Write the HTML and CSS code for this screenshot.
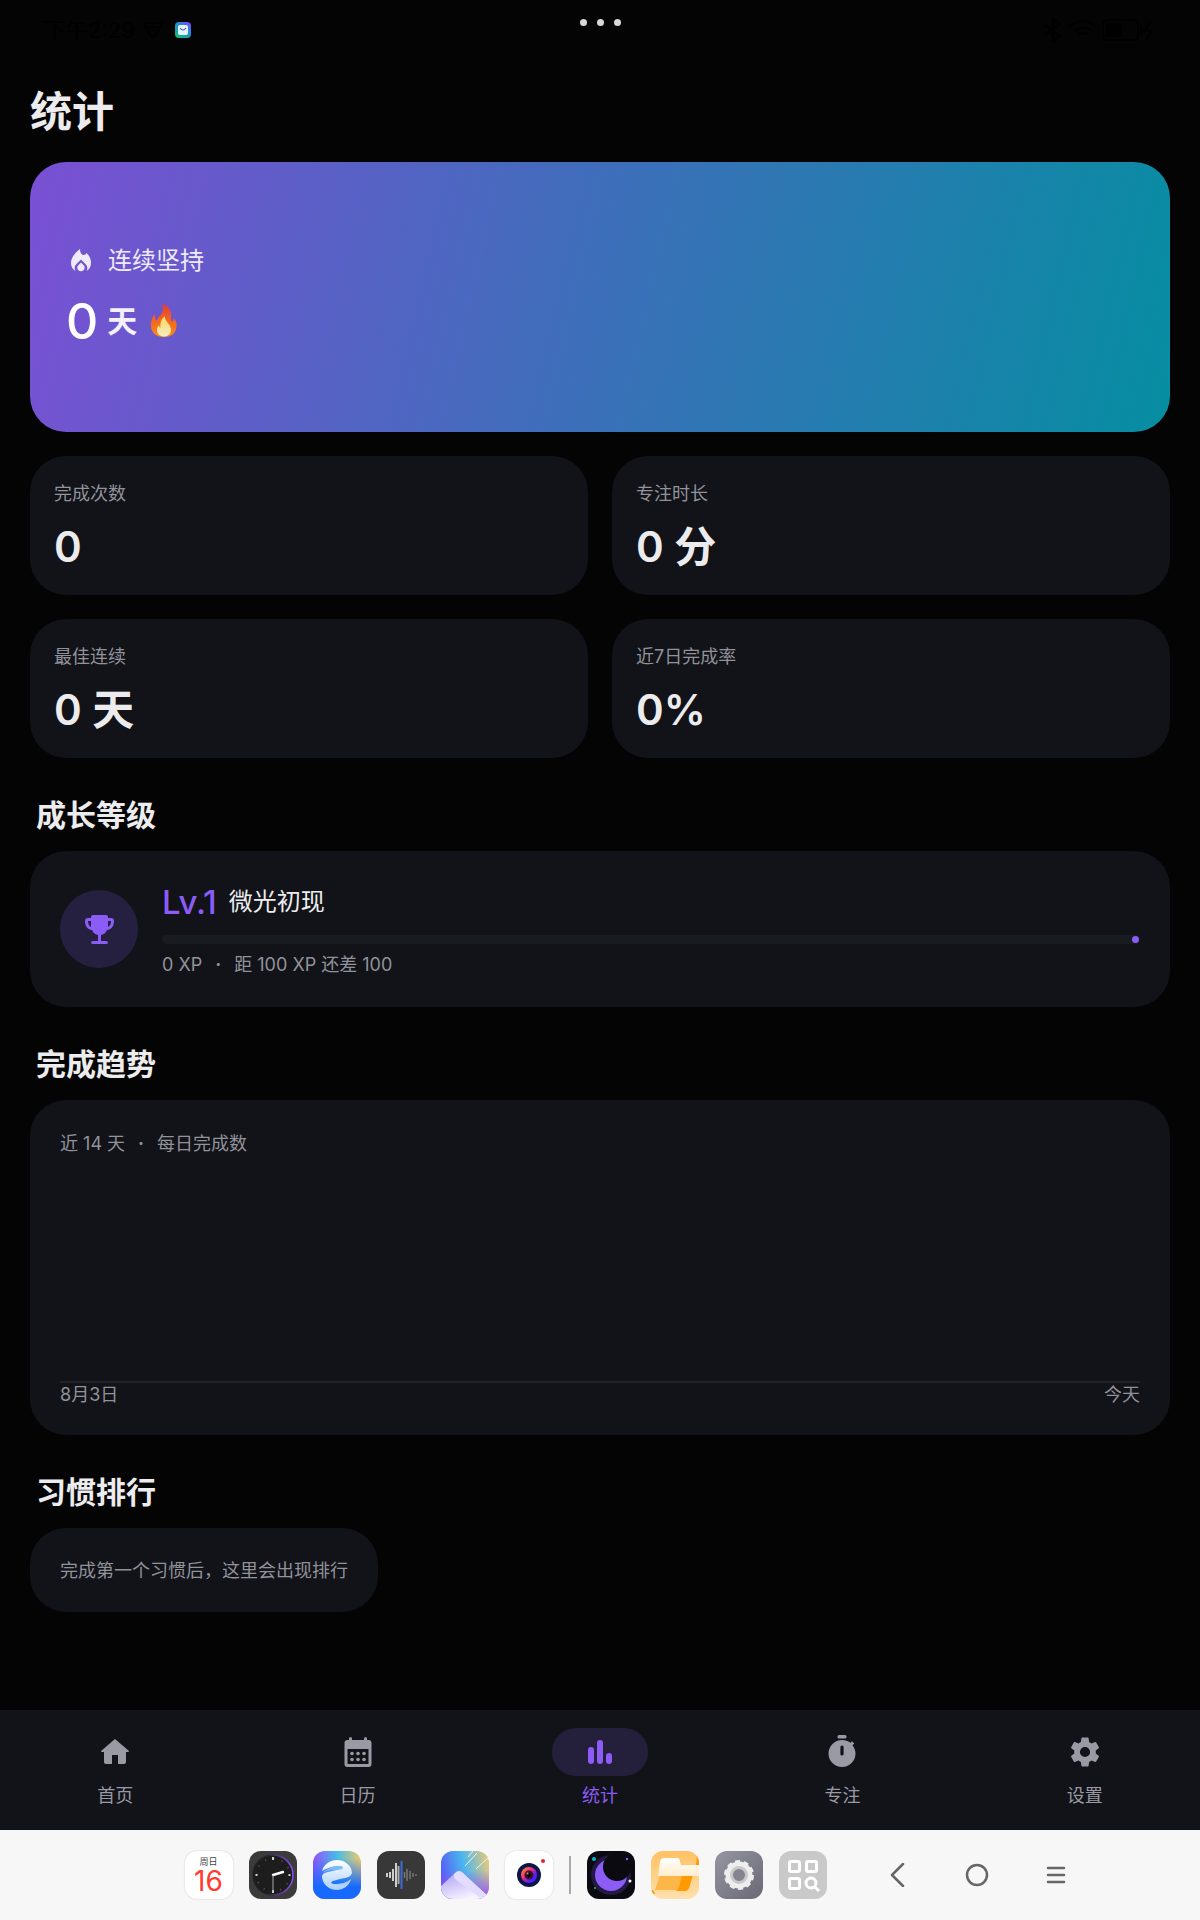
FILE: index.html
```html
<!DOCTYPE html>
<html lang="zh-CN">
<head>
    <meta charset="UTF-8">
    <meta name="viewport" content="width=device-width, initial-scale=1.0">
    <title>统计</title>
    <link rel="stylesheet" href="styles.css">
</head>
<body>
    <div class="status-bar">
        <div class="status-left">
            <span>下午2:29</span>
            <svg width="20" height="18" viewBox="0 0 20 18" fill="none" stroke="#000" stroke-width="2"><path d="M3 2h14q2 1 1 3l-6 10q-2 2-4 0L2 5q-1-2 1-3zM6 6h8M8 9h4"/></svg>
            <svg class="status-app" width="16" height="16" viewBox="0 0 16 16">
                <defs><linearGradient id="mail" x1="1" y1="0" x2="0.3" y2="1"><stop offset="0" stop-color="#8a3cff"/><stop offset="0.5" stop-color="#1e8fd8"/><stop offset="1" stop-color="#10b981"/></linearGradient></defs>
                <rect width="16" height="16" rx="4" fill="url(#mail)"/>
                <rect x="3" y="3" width="10" height="10" rx="2" fill="#e4f6f6"/>
                <path d="M5 6q3 4 6 0" fill="none" stroke="#4f5bd5" stroke-width="1.2"/>
            </svg>
        </div>
        <div class="status-dots"><i></i><i></i><i></i></div>
        <div class="status-right">
            <svg width="112" height="24" viewBox="0 0 112 24" fill="none" stroke="#000" stroke-width="2">
                <path d="M1 7l15 11-7 5V1l7 5L1 17"/>
                <path d="M26 8q13-10 26 0M30 13q9-7 18 0M34 17q5-4 10 0"/>
                <rect x="59" y="2" width="35" height="20" rx="4"/><rect x="63" y="6" width="14" height="12" fill="#000"/><path d="M97 8v8M106 4l-5 9h6l-4 8"/>
            </svg>
        </div>
    </div>

    <main class="page">
        <h1>统计</h1>

        <section class="hero">
            <div class="hero-label">
                <svg width="30" height="30" viewBox="0 0 30 30">
                    <path d="M14 3C10 6 5 11 5 17c0 4 2 6.500 4.500 8-.7-1.200-1-2.500-.7-4 .4-2.500 3-4 6.200-7.500 3.200 3.500 5.800 5 6.200 7.500.3 1.500 0 2.800-.7 4 2.500-1.500 4.500-4 4.500-8 0-4-1.500-7.500-4.500-10-.5 1.300-1.500 2-2.600 2C15.500 9 14 6.500 14 3z"/>
                    <path d="M15 16.500l-2.700 2.700c-2 2-.9 6 2.700 6s4.700-4 2.700-6z"/>
                </svg>
                <span>连续坚持</span>
            </div>
            <div class="hero-value">
                <strong>0</strong>
                <span>天</span>
                <svg width="36" height="36" viewBox="0 0 30 36">
                    <defs>
                        <linearGradient id="flame" x1="0" y1="0" x2="0" y2="1"><stop offset="0" stop-color="#e33b3b"/><stop offset="0.55" stop-color="#f46a20"/><stop offset="1" stop-color="#f98d12"/></linearGradient>
                        <linearGradient id="core" x1="0" y1="0" x2="0" y2="1"><stop offset="0" stop-color="#f8d95a"/><stop offset="1" stop-color="#f6ecc0"/></linearGradient>
                    </defs>
                    <path fill="url(#flame)" d="M13 1c6 1 10 6 9 13 0 2 0 4 1 5 1-1 1.500-2.500 1.500-4 3 3 3.500 6 3 9-1 7-6 10-12.500 10S3 31 2 24c-.5-5 1-10 4-13-.2 3 .2 5 1.500 7C9 13 17 9 13 1z"/>
                    <path fill="url(#core)" d="M16 13c-1 5 6 8 6 14 0 4-3 6.500-7 6.500S8 31 8 27c0-2 .6-3.500 2-5 .2 1.500.7 2.500 1.500 3C11 20 12 16 16 13z"/>
                </svg>
            </div>
        </section>

        <div class="stats">
            <div class="card stat"><span class="muted">完成次数</span><strong>0</strong></div>
            <div class="card stat"><span class="muted">专注时长</span><strong>0 分</strong></div>
            <div class="card stat"><span class="muted">最佳连续</span><strong>0 天</strong></div>
            <div class="card stat"><span class="muted">近7日完成率</span><strong>0%</strong></div>
        </div>

        <h2>成长等级</h2>
        <section class="card level">
            <div class="level-icon">
                <svg width="36" height="36" viewBox="0 0 36 36">
                    <path d="M12 4h13q2 0 2 2v1h3q3 0 3 3c0 6-3 8.500-7 9-1 3-3.500 4.600-6 5v6h5q2 0 2 1.500T25 33H12q-2 0-2-1.500t2-1.500h5v-6c-2.500-.4-5-2-6-5-4-.5-7-3-7-9q0-3 3-3h3V6q0-2 2-2zM7 10c0 3 1 5 3 6v-6zm20 0v6c2-1 3-3 3-6z"/>
                </svg>
            </div>
            <div class="level-body">
                <div class="level-name"><strong>Lv.1</strong><span>微光初现</span></div>
                <div class="track"></div>
                <p class="muted">0 XP<span class="sep">·</span>距 100 XP 还差 100</p>
            </div>
        </section>

        <h2>完成趋势</h2>
        <section class="card trend">
            <p class="muted">近 14 天<span class="sep">·</span>每日完成数</p>
            <div class="chart"></div>
            <div class="axis muted"><span>8月3日</span><span>今天</span></div>
        </section>

        <h2>习惯排行</h2>
        <section class="card ranking muted">完成第一个习惯后，这里会出现排行</section>
    </main>

    <nav class="tabs">
        <a href="#home">
            <span class="pill"><svg width="36" height="36" viewBox="0 0 36 36"><path d="M18 5l14 12q0 1-1 1h-2v10q0 2-2 2h-6v-9h-6v9H9q-2 0-2-2V18H5q-1 0-1-1z"/></svg></span>
            首页
        </a>
        <a href="#calendar">
            <span class="pill"><svg width="36" height="36" viewBox="0 0 36 36"><path fill-rule="evenodd" d="M9 4.500q0-1.500 1.500-1.500T12 4.500V6h12V4.500Q24 3 25.500 3T27 4.500V6h1.500Q31.500 6 31.500 9v21q0 3-3 3h-21q-3 0-3-3V9q0-3 3-3H9zM7.500 15v15h21V15z"/><circle cx="12" cy="19.500" r="1.800"/><circle cx="18" cy="19.500" r="1.800"/><circle cx="24" cy="19.500" r="1.800"/><circle cx="12" cy="25.500" r="1.800"/><circle cx="18" cy="25.500" r="1.800"/><circle cx="24" cy="25.500" r="1.800"/></svg></span>
            日历
        </a>
        <a href="#stats" class="active">
            <span class="pill"><svg width="36" height="36" viewBox="0 0 36 36"><rect x="6" y="13" width="6" height="17" rx="3"/><rect x="15" y="6" width="6" height="24" rx="3"/><rect x="24" y="19" width="6" height="11" rx="3"/></svg></span>
            统计
        </a>
        <a href="#focus">
            <span class="pill"><svg width="36" height="36" viewBox="0 0 36 36"><rect x="13.500" y="1" width="9" height="3.500" rx="1.500"/><path fill-rule="evenodd" d="M18 6c3.200 0 6 1 8.400 2.800L28 7.200l2.300 2.200-1.800 1.800C30.400 13.600 31.500 16.500 31.500 19.500a13.500 13.500 0 1 1-27 0A13.500 13.500 0 0 1 18 6zm-1.600 7v7q0 1.500 1.600 1.500t1.600-1.500v-7q0-1.500-1.600-1.500T16.400 13z"/></svg></span>
            专注
        </a>
        <a href="#settings">
            <span class="pill"><svg width="36" height="36" viewBox="0 0 24 24"><path d="M19.140 12.940c.04-.3.060-.61.060-.94s-.02-.64-.07-.94l2.030-1.580c.18-.14.230-.41.120-.61l-1.920-3.320c-.12-.22-.37-.29-.59-.22l-2.390.96c-.5-.38-1.030-.7-1.620-.94l-.36-2.540c-.04-.24-.24-.41-.48-.41h-3.840c-.24 0-.43.170-.47.410l-.36 2.540c-.59.240-1.130.57-1.620.94l-2.390-.96c-.22-.08-.47 0-.59.220L2.740 8.870c-.12.210-.08.470.12.610l2.030 1.580c-.05.3-.09.630-.09.940s.02.640.07.940l-2.030 1.580c-.18.140-.23.410-.12.610l1.920 3.320c.12.220.37.290.59.220l2.390-.96c.5.380 1.030.7 1.620.94l.36 2.540c.05.240.24.410.48.410h3.840c.24 0 .44-.17.47-.41l.36-2.540c.59-.24 1.130-.56 1.620-.94l2.390.96c.22.080.47 0 .59-.22l1.920-3.320c.12-.22.070-.47-.12-.61zM12 15.400A3.400 3.400 0 1 1 12 8.600a3.400 3.400 0 0 1 0 6.800z"/></svg></span>
            设置
        </a>
    </nav>

    <footer class="dock">
        <div class="apps">
            <a href="#date" class="app date"><small>周日</small><b>16</b></a>
            <a href="#clock" class="app" aria-label="时钟">
                <svg viewBox="0 0 48 48">
                    <defs><linearGradient id="ring" x1="0" y1="0" x2="1" y2="0"><stop offset="0.3" stop-color="#222"/><stop offset="1" stop-color="#8b4cf0"/></linearGradient></defs>
                    <rect width="48" height="48" fill="#3b3b3b"/>
                    <circle cx="24" cy="24" r="20" fill="#1d1d1e" stroke="url(#ring)" stroke-width="1.500"/>
                    <circle cx="24" cy="24" r="16.500" fill="none" stroke="#555" stroke-width="2" stroke-dasharray="1 7.640"/>
                    <path d="M24 6v3M6.500 24h2M39.500 24h2M24 39v3" stroke="#ccc" stroke-width="2"/>
                    <path d="M24 24l10-3" stroke="#fff" stroke-width="2.400" stroke-linecap="round"/>
                    <path d="M24 24v16" stroke="#aaa"/>
                </svg>
            </a>
            <a href="#browser" class="app" aria-label="浏览器">
                <svg viewBox="0 0 48 48">
                    <defs>
                        <linearGradient id="sky" x1="0" y1="0" x2="1" y2="0"><stop offset="0" stop-color="#9650fa"/><stop offset="0.5" stop-color="#45bce8"/><stop offset="1" stop-color="#f3c968"/></linearGradient>
                        <linearGradient id="sea" x1="0" y1="0" x2="0" y2="1"><stop offset="0.15" stop-color="#1768ff" stop-opacity="0"/><stop offset="0.75" stop-color="#1768ff"/></linearGradient>
                        <linearGradient id="globe" x1="0" y1="0" x2="0" y2="1"><stop offset="0" stop-color="#fff"/><stop offset="1" stop-color="#a9d0ff"/></linearGradient>
                    </defs>
                    <rect width="48" height="48" fill="url(#sky)"/><rect width="48" height="48" fill="url(#sea)"/>
                    <path fill="url(#globe)" d="M9 20C11 13 17 9 24 9c8 0 15 6 15 13-1 4-6 5-12 6l-7 2c-3 1-2 3 2 3 6 0 12-1 16-5-2 7-8 11-14 11-8 0-15-6-15-14 1-3 5-4 10-5l9-2c3-1 2-3-2-3-6 0-12 2-17 5z"/>
                    <path fill="#9cc9fb" opacity=".7" d="M9 22c5-4 10-7 18-7 4 0 4 3 1 4-6-1-12 0-19 3zM22 33c6 0 12-1 16-5-3 7-9 8-16 5z"/>
                </svg>
            </a>
            <a href="#recorder" class="app" aria-label="录音机">
                <svg viewBox="0 0 48 48"><rect width="48" height="48" fill="#383838"/><path d="M10 22v4M13 21v6M16 18v12M19 12v24" stroke="#fff" stroke-width="1.500"/><path d="M21.500 15v18" stroke="#aaa" stroke-width="2"/><path d="M24.500 10v28" stroke="#3d6bd8" stroke-width="2"/><path d="M27.500 21v6M30 18v12M33 20v8M36 22v4M39 23v2" stroke="#777" stroke-width="1.500"/></svg>
            </a>
            <a href="#gallery" class="app" aria-label="相册">
                <svg viewBox="0 0 48 48">
                    <defs>
                        <linearGradient id="dusk" x1="0" y1="0.500" x2="1" y2="0.300"><stop offset="0" stop-color="#565cf5"/><stop offset="0.5" stop-color="#4bb7ee"/><stop offset="1" stop-color="#e0c97f"/></linearGradient>
                        <linearGradient id="violet" x1="0" y1="0" x2="0" y2="1"><stop offset="0.4" stop-color="#9a4df6" stop-opacity="0"/><stop offset="1" stop-color="#9a4df6"/></linearGradient>
                        <linearGradient id="peak" x1="0" y1="0" x2="0.500" y2="1"><stop offset="0" stop-color="#a99af6"/><stop offset="1" stop-color="#f7f3ff"/></linearGradient>
                    </defs>
                    <rect width="48" height="48" fill="url(#dusk)"/><rect width="48" height="48" fill="url(#violet)"/>
                    <path fill="url(#peak)" d="M0 35l14-13q4-4 8 0l26 24v2H0z"/>
                    <path fill="#e2dcff" d="M14 22q4-4 8 0l24 23q-6 4-12-2L15 29q-4-4-1-7z"/>
                    <path d="M24 15L36 2M35 18L48 6M27 6l5-6" stroke="#fff" stroke-opacity=".8"/>
                </svg>
            </a>
            <a href="#camera" class="app light" aria-label="相机">
                <svg viewBox="0 0 48 48">
                    <defs><linearGradient id="lens" x1="0" y1="0" x2="1" y2="1"><stop offset="0" stop-color="#ffa31a"/><stop offset="0.4" stop-color="#f02c7c"/><stop offset="0.7" stop-color="#5a1bff"/><stop offset="1" stop-color="#2a2dff"/></linearGradient></defs>
                    <rect width="48" height="48" fill="#fff"/><circle cx="24" cy="24" r="12" fill="#0d1548"/><circle cx="24" cy="24" r="8" fill="url(#lens)"/><circle cx="24" cy="24" r="4.500" fill="#35162f"/><circle cx="24" cy="24" r="2" fill="#000"/><circle cx="22.500" cy="22.500" r="1" fill="#e98b5a"/><circle cx="38" cy="10" r="2" fill="#e8203a"/>
                </svg>
            </a>
            <span class="divider"></span>
            <a href="#moon" class="app" aria-label="微光">
                <svg viewBox="0 0 48 48"><rect width="48" height="48" fill="#0b0a10"/><circle cx="24" cy="24" r="20" fill="#231943"/><circle cx="24" cy="24" r="16" fill="#8b5cf6"/><circle cx="30" cy="16" r="14" fill="#0b0a10"/><circle cx="7" cy="8" r="2" fill="#06b6d4"/><circle cx="40" cy="8" r="1.200" fill="#8b5cf6"/><circle cx="43" cy="30" r="1.500" fill="#fff"/><circle cx="8" cy="37" r="1" fill="#22c55e"/></svg>
            </a>
            <a href="#files" class="app" aria-label="文件">
                <svg viewBox="0 0 48 48">
                    <defs><linearGradient id="folder" x1="0" y1="0" x2="0" y2="1"><stop offset="0" stop-color="#ffc163"/><stop offset="1" stop-color="#ffe0ac"/></linearGradient><linearGradient id="paper" x1="0" y1="0" x2="0" y2="1"><stop offset="0" stop-color="#fff"/><stop offset="1" stop-color="#ffedcf"/></linearGradient></defs>
                    <rect width="48" height="48" fill="url(#folder)"/>
                    <path fill="#ffb648" d="M9 24h33l-5 15H4z"/><path fill="#ff9a05" d="M31 24h11l-4 13q-1 3-4 3H24q3-1 4-4zM46 5h2v9h-3zM0 39h2l2 4H2z"/>
                    <path fill="url(#paper)" d="M13 7h13q3 0 3 4l1 3h18v11H7l2-14q1-4 4-4z"/>
                </svg>
            </a>
            <a href="#system" class="app" aria-label="系统设置">
                <svg viewBox="0 0 48 48">
                    <defs><linearGradient id="steel" x1="0" y1="0" x2="1" y2="1"><stop offset="0" stop-color="#9696a4"/><stop offset="1" stop-color="#696874"/></linearGradient></defs>
                    <rect width="48" height="48" fill="url(#steel)"/>
                    <circle cx="24" cy="24" r="13.500" fill="#eee"/><circle cx="24" cy="24" r="13.500" fill="none" stroke="#eee" stroke-width="3" stroke-dasharray="5 3.480"/><circle cx="24" cy="24" r="7.500" fill="#84838f" stroke="#c8c8c8" stroke-width="3"/>
                </svg>
            </a>
            <a href="#search" class="app" aria-label="全部应用">
                <svg viewBox="0 0 48 48"><rect width="48" height="48" fill="#c9c9c9"/><g fill="none" stroke="#fff" stroke-width="3"><rect x="10.500" y="10.500" width="10" height="10" rx="1.500"/><rect x="27.500" y="10.500" width="10" height="10" rx="1.500"/><rect x="10.500" y="27.500" width="10" height="10" rx="1.500"/><circle cx="32" cy="32" r="5"/><path d="M35.500 35.500l4.500 4.500"/></g></svg>
            </a>
        </div>
        <div class="system-keys">
            <button type="button" aria-label="返回"><svg width="24" height="24" viewBox="0 0 24 24"><path d="M17 1L6 12l11 11"/></svg></button>
            <button type="button" aria-label="主屏幕"><svg width="24" height="24" viewBox="0 0 24 24"><circle cx="12" cy="12" r="10"/></svg></button>
            <button type="button" aria-label="菜单"><svg width="24" height="24" viewBox="0 0 24 24"><path d="M4 5h16M4 12h16M4 19h16"/></svg></button>
        </div>
    </footer>
</body>
</html>
```
FILE: styles.css
```css
* {
    box-sizing: border-box;
}
body {
    display: flex;
    flex-direction: column;
    min-height: 100vh;
    margin: 0;
    background-color: #040404;
    color: #ececee;
    font-family: Inter, "Noto Sans CJK SC", sans-serif;
    font-size: 18px;
    line-height: 24px;
}
h1, h2, p {
    margin: 0;
}
a {
    color: inherit;
    text-decoration: none;
}
svg {
    display: block;
}
/* 状态栏 */
.status-bar {
    display: grid;
    grid-template-columns: 1fr auto 1fr;
    height: 60px;
    padding: 0 44px;
    color: #000;
    font-size: 22px;
}
.status-left {
    display: flex;
    align-items: center;
    gap: 8px;
}
.status-app {
    margin-left: 4px;
}
.status-right {
    display: flex;
    align-items: center;
    justify-content: flex-end;
}
.status-dots {
    display: flex;
    gap: 10px;
    padding-top: 19px;
}
.status-dots i {
    width: 7px;
    height: 7px;
    border-radius: 50%;
    background-color: #d8d8d8;
}
/* 页面内容 */
.page {
    flex: 1;
    padding: 22px 30px;
}
h1 {
    margin-bottom: 20px;
    font-size: 42px;
    line-height: 60px;
}
h2 {
    margin: 35px 6px 13px;
    font-size: 30px;
    line-height: 45px;
}
.card {
    border-radius: 36px;
    background-color: #111318;
}
.muted {
    color: #92929b;
}
.hero {
    padding: 81px 36px;
    border-radius: 36px;
    background: linear-gradient(103deg, #7a50d4, #3c6fb9 50%, #068ea2);
}
.hero-label {
    display: flex;
    align-items: center;
    gap: 12px;
    margin-bottom: 12px;
    color: #eeeafa;
    font-size: 24px;
    line-height: 36px;
}
.hero-label svg {
    fill: #eeeafa;
}
.hero-value {
    display: flex;
    align-items: center;
    gap: 9px;
    color: #f3f0fc;
    font-size: 30px;
    font-weight: 700;
    line-height: 60px;
}
.hero-value strong {
    color: #fff;
    font-size: 50px;
    font-weight: 500;
}
.stats {
    display: grid;
    grid-template-columns: 1fr 1fr;
    gap: 24px;
    margin-top: 24px;
}
.stat {
    display: flex;
    flex-direction: column;
    gap: 12px;
    padding: 26px 24px 19px;
}
.stat strong {
    font-size: 42px;
    font-weight: 600;
    line-height: 58px;
}
/* 成长等级 */
.level {
    display: flex;
    align-items: center;
    gap: 24px;
    padding: 30px;
}
.level-icon {
    display: grid;
    place-items: center;
    width: 78px;
    height: 78px;
    border-radius: 50%;
    background-color: #262040;
}
.level-icon svg {
    fill: #8b5cf6;
}
.level-body {
    flex: 1;
}
.level-name {
    display: flex;
    align-items: center;
    gap: 12px;
    font-size: 24px;
    line-height: 42px;
}
.level-name strong {
    color: #8b5cf6;
    font-size: 33px;
    font-weight: 500;
}
.track {
    display: flex;
    align-items: center;
    justify-content: flex-end;
    height: 9px;
    margin: 12px 0 9px;
    padding-right: 1px;
    border-radius: 5px;
    background-color: #181b20;
}
.track::after {
    content: '';
    width: 7px;
    height: 7px;
    border-radius: 50%;
    background-color: #8b5cf6;
}
.sep {
    margin: 0 13px;
    font-weight: 700;
}
/* 完成趋势 */
.trend {
    padding: 32px 30px 28px;
}
.chart {
    height: 227px;
    border-bottom: 2px solid #202227;
}
.axis {
    display: flex;
    justify-content: space-between;
}
.ranking {
    width: fit-content;
    padding: 31px 30px 29px;
}
/* 底部导航 */
.tabs {
    display: flex;
    gap: 12px;
    height: 120px;
    padding-top: 18px;
    background-color: #111318;
    color: #9a9aa4;
}
.tabs a {
    display: flex;
    flex: 1;
    flex-direction: column;
    align-items: center;
    gap: 8px;
}
.tabs svg {
    fill: #9a9aa4;
}
.pill {
    display: grid;
    place-items: center;
    width: 96px;
    height: 48px;
    border-radius: 24px;
}
.tabs .active {
    color: #8b5cf6;
}
.active .pill {
    background-color: #241f3b;
}
.tabs .active svg {
    fill: #8b5cf6;
}
/* 系统任务栏 */
.dock {
    display: flex;
    align-items: center;
    justify-content: center;
    gap: 53px;
    height: 90px;
    padding-left: 58px;
    background-color: #f7f7f7;
}
.apps {
    display: flex;
    align-items: center;
    gap: 16px;
}
.app {
    width: 48px;
    height: 48px;
    border-radius: 12px;
    overflow: hidden;
}
.light, .date {
    background-color: #fff;
    box-shadow: 0 0 2px rgba(0, 0, 0, 0.2);
}
.date {
    display: flex;
    flex-direction: column;
    align-items: center;
    color: #444;
}
.date small {
    padding-top: 4px;
    font-size: 9px;
    line-height: 14px;
}
.date b {
    color: #ff3b30;
    font-size: 28px;
    font-weight: 400;
    line-height: 24px;
}
.divider {
    width: 2px;
    height: 38px;
    background-color: #aaa;
}
.system-keys {
    display: flex;
    gap: 43px;
}
.system-keys button {
    padding: 6px;
    border: 0;
    background: none;
}
.system-keys svg {
    fill: none;
    stroke: #666;
    stroke-width: 2.5;
    stroke-linecap: round;
    stroke-linejoin: round;
}
```
